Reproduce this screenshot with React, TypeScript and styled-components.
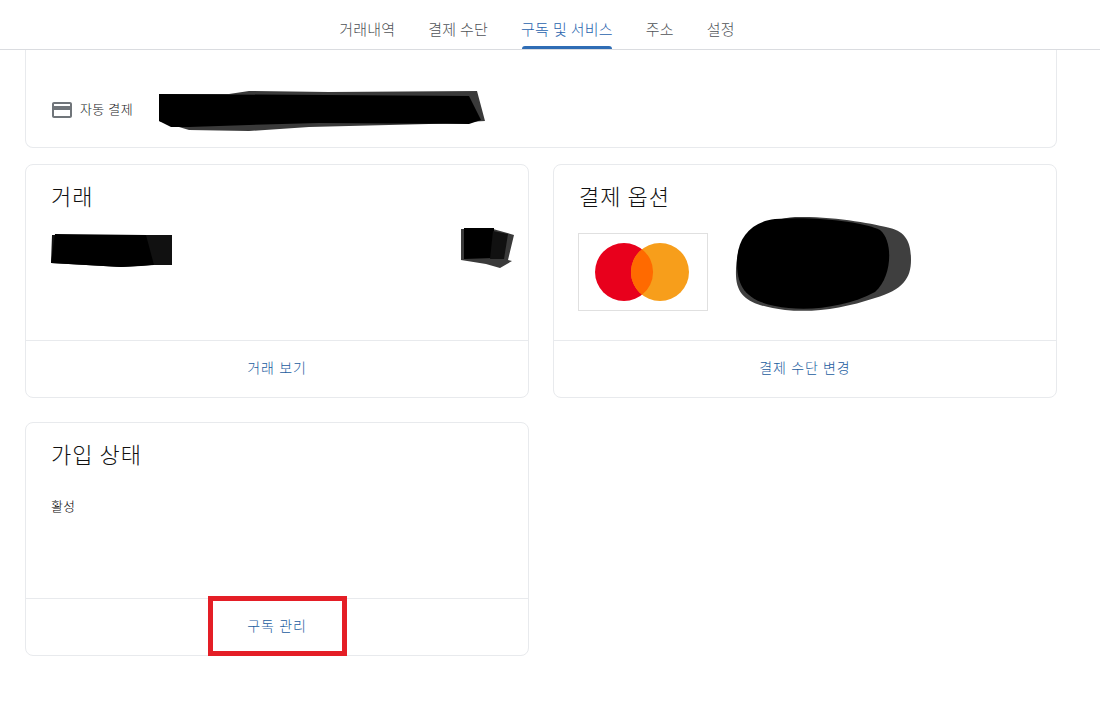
import styled, { createGlobalStyle } from "styled-components";

const GlobalStyle = createGlobalStyle`
  html, body {
    margin: 0;
    padding: 0;
    background: #fff;
  }
  body {
    font-family: Roboto, "Noto Sans CJK KR", sans-serif;
    overflow: hidden;
  }
`;

const Page = styled.div`
  width: 1100px;
  height: 707px;
  position: relative;
  overflow: hidden;
`;

const Nav = styled.nav`
  height: 49px;
  display: flex;
  justify-content: center;
  align-items: flex-end;
  gap: 33px;
  padding-right: 26px;
  border-bottom: 1px solid #dadce0;
`;

const Tab = styled.div<{ $active?: boolean }>`
  height: 49px;
  padding-top: 22px;
  box-sizing: border-box;
  font-size: 15px;
  font-weight: 300;
  line-height: 17px;
  letter-spacing: 0.2px;
  white-space: nowrap;
  position: relative;
  color: ${(p) => (p.$active ? "#1f62ad" : "#4f5357")};

  ${(p) =>
    p.$active &&
    `
    &::after {
      content: "";
      position: absolute;
      left: 1px;
      right: 1px;
      bottom: 0;
      height: 3px;
      background: #2f6db5;
      border-radius: 3px 3px 0 0;
    }
  `}
`;

const Content = styled.main`
  padding: 0 43px 0 25px;
  display: flex;
  flex-direction: column;
`;

const TopCard = styled.section`
  height: 98px;
  box-sizing: border-box;
  border: 1px solid #e8eaed;
  border-top: none;
  border-radius: 0 0 8px 8px;
  padding: 0 0 25px 24px;
  display: flex;
  align-items: flex-end;
  margin-bottom: 16px;
`;

const AutoPay = styled.div`
  display: flex;
  align-items: center;
  gap: 6px;
  font-size: 13px;
  font-weight: 300;
  line-height: 24px;
  letter-spacing: 0.4px;
  color: #202124;
`;

const Scribble = styled.svg`
  display: block;
  flex: none;
`;

const TopScribble = styled(Scribble)`
  margin: 0 0 -11px 26px;
`;

const AmountScribble = styled(Scribble)`
  margin-top: -5px;
`;

const Grid = styled.div`
  display: grid;
  grid-template-columns: 504px 504px;
  grid-auto-rows: 234px;
  column-gap: 24px;
  row-gap: 24px;
`;

const Card = styled.section`
  box-sizing: border-box;
  border: 1px solid #e8eaed;
  border-radius: 8px;
  display: flex;
  flex-direction: column;
`;

const CardBody = styled.div`
  flex: 1;
  padding: 19px 24px 0 25px;
  min-height: 0;
`;

const CardTitle = styled.h2`
  margin: 0;
  font-size: 22px;
  line-height: 28px;
  font-weight: 300;
  letter-spacing: 0.9px;
  color: #111;
`;

const CardAction = styled.div`
  height: 56px;
  flex: none;
  border-top: 1px solid #e8eaed;
  display: flex;
  align-items: center;
  justify-content: center;
  font-size: 14px;
  font-weight: 300;
  letter-spacing: 0.9px;
  color: #1a5c9e;

  & > span {
    margin-bottom: 5px;
  }
`;

const ScribbleRow = styled.div`
  margin: 21px -10px 0 0;
  display: flex;
  justify-content: space-between;
  align-items: flex-start;
`;

const PaymentRow = styled.div`
  margin-top: 4px;
  display: flex;
  align-items: flex-start;
  gap: 27px;
`;

const CardLogo = styled.div`
  width: 130px;
  height: 78px;
  box-sizing: border-box;
  margin-top: 17px;
  margin-left: -1px;
  padding-right: 2px;
  border: 1px solid #e0e0e0;
  display: flex;
  align-items: center;
  justify-content: center;
`;

const StatusText = styled.p`
  margin: 28px 0 0;
  font-size: 13px;
  font-weight: 300;
  line-height: 18px;
  color: #000;
`;

// red annotation drawn over the screenshot
const Highlight = styled.div`
  position: absolute;
  left: 208px;
  top: 596px;
  width: 139px;
  height: 60px;
  box-sizing: border-box;
  border: 5px solid #e41e26;
`;

function CardIcon() {
  return (
    <svg width="24" height="24" viewBox="0 0 24 24" fill="#70757a">
      <path d="M20 4H4c-1.1 0-2 .9-2 2v12c0 1.1.9 2 2 2h16c1.1 0 2-.9 2-2V6c0-1.1-.9-2-2-2zm0 14H4v-6h16v6zm0-10H4V6h16v2z" />
    </svg>
  );
}

function MastercardLogo() {
  return (
    <svg width="96" height="60" viewBox="0 0 96 60">
      <circle cx="30" cy="30" r="29" fill="#e8001c" />
      <circle cx="66" cy="30" r="29" fill="#f79e1b" />
      <path d="M48 7.2a29 29 0 0 1 0 45.6a29 29 0 0 1 0-45.6z" fill="#ff6a00" />
    </svg>
  );
}

export default function App() {
  return (
    <Page>
      <GlobalStyle />
      <Nav>
        <Tab>거래내역</Tab>
        <Tab>결제 수단</Tab>
        <Tab $active>구독 및 서비스</Tab>
        <Tab>주소</Tab>
        <Tab>설정</Tab>
      </Nav>
      <Content>
        <TopCard>
          <AutoPay>
            <CardIcon />
            자동 결제
          </AutoPay>
          <TopScribble width="328" height="42" viewBox="0 0 328 42">
            <path d="M0 3 L70 3 L90 0 L170 1 L318 0 L326 30 L270 33 L150 36 L90 40 L30 39 L0 30 Z" fill="#3a3a3a" />
            <path d="M0 3 L310 5 L322 29 L310 33 L160 32 L90 34 L30 36 L12 36 L0 30 Z" fill="#000" />
          </TopScribble>
        </TopCard>
        <Grid>
          <Card>
            <CardBody>
              <CardTitle>거래</CardTitle>
              <ScribbleRow>
                <Scribble width="121" height="35" viewBox="0 0 121 35">
                  <path d="M1 2 L121 2 L121 32 L100 32 L90 33 L70 34 L0 30 Z" fill="#111" />
                  <path d="M4 1 L95 2 L103 32 L70 34 L0 30 Z" fill="#000" />
                </Scribble>
                <AmountScribble width="54" height="41" viewBox="0 0 54 41">
                  <path d="M1 1 L33 1 L54 7 L48 32 L52 33 L40 40 L26 36 L1 32 Z" fill="#3a3a3a" />
                  <path d="M4 0 L34 0 L34 30 L4 31 Z" fill="#000" />
                  <path d="M33 3 L48 6 L44 31 L30 31 Z" fill="#111" />
                </AmountScribble>
              </ScribbleRow>
            </CardBody>
            <CardAction><span>거래 보기</span></CardAction>
          </Card>
          <Card>
            <CardBody>
              <CardTitle>결제 옵션</CardTitle>
              <PaymentRow>
                <CardLogo>
                  <MastercardLogo />
                </CardLogo>
                <Scribble width="176" height="96" viewBox="0 0 176 96">
                  <path d="M60 1 C100 0 140 8 155 12 C172 16 176 28 176 44 C176 62 168 74 140 82 C110 92 80 97 50 94 C20 90 2 84 1 60 C0 30 10 6 60 1 Z" fill="#3f3f3f" />
                  <path d="M40 3 C80 0 130 6 145 14 C158 24 158 60 140 76 C110 92 70 96 40 90 C10 84 2 70 2 46 C2 24 14 6 40 3 Z" fill="#000" />
                </Scribble>
              </PaymentRow>
            </CardBody>
            <CardAction><span>결제 수단 변경</span></CardAction>
          </Card>
          <Card>
            <CardBody>
              <CardTitle>가입 상태</CardTitle>
              <StatusText>활성</StatusText>
            </CardBody>
            <CardAction><span>구독 관리</span></CardAction>
          </Card>
        </Grid>
      </Content>
      <Highlight />
    </Page>
  );
}
